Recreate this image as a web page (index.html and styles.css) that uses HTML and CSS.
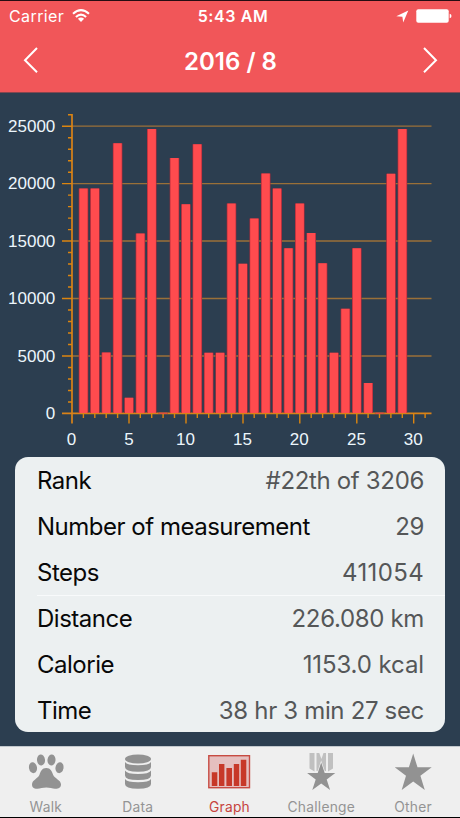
FILE: index.html
```
<!DOCTYPE html>
<html lang="en">
<head>
<meta charset="utf-8">
<title>Graph</title>
<link rel="stylesheet" href="styles.css">
</head>
<body>
<div class="app">
  <header class="header">
    <div class="status">
      <div class="carrier"><span>Carrier</span>
        <svg width="18" height="14" viewBox="0 0 18 14"><g fill="none" stroke="#fff" stroke-width="2.1"><path d="M1 4.8Q9-2.4 17 4.8"/><path d="M3.9 8Q9 3.4 14.1 8"/></g><path fill="#fff" d="M5.9 9.7Q9 7.3 12.1 9.7L9 13Z"/></svg>
      </div>
      <span class="clock">5:43 AM</span>
      <div class="power">
        <svg width="13" height="13" viewBox="0 0 13 13"><path fill="#fff" d="M12.3.5 7.2 12.5 6.4 6.8.3 6.2Z"/></svg>
        <svg width="36" height="14" viewBox="0 0 36 14"><rect x=".3" y=".3" width="32.4" height="13.4" rx="2" fill="#fff"/><path fill="#fff" d="M33.7 4.8Q35.5 5.2 35.5 7T33.7 9.2Z"/></svg>
      </div>
    </div>
    <nav class="month">
      <svg width="16" height="28" viewBox="0 0 16 28"><path d="M14 2 2 14.2 14 26.2"/></svg>
      <h1>2016 / 8</h1>
      <svg width="16" height="28" viewBox="0 0 16 28"><path d="M2 2 14 14.2 2 26.2"/></svg>
    </nav>
  </header>
  <svg class="chart" width="460" height="364" viewBox="0 93 460 364">
    <path class="grid" d="M72 126.2H431.5M72 183.6H431.5M72 241H431.5M72 298.5H431.5M72 356H431.5"/>
    <path class="axis" d="M72 114V423.5M62 413.4H431.5"/>
    <path class="tick" d="M62 126.2H72M62 183.6H72M62 241H72M62 298.5H72M62 356H72
      M68 114.7H72M68 137.7H72M68 149.2H72M68 160.7H72M68 172.2H72M68 195.1H72M68 206.6H72M68 218.1H72M68 229.6H72M68 252.5H72M68 264H72M68 275.5H72M68 287H72M68 310H72M68 321.5H72M68 333H72M68 344.5H72M68 367.5H72M68 379H72M68 390.5H72M68 402H72"/>
    <path class="tick" d="M129 413V423.5M186 413V423.5M243 413V423.5M299.8 413V423.5M356.8 413V423.5M413.7 413V423.5
      M83.4 413V418M94.8 413V418M106.2 413V418M117.6 413V418M140.3 413V418M151.7 413V418M163.1 413V418M174.5 413V418M197.3 413V418M208.7 413V418M220.1 413V418M231.5 413V418M254.2 413V418M265.6 413V418M277 413V418M288.4 413V418M311.2 413V418M322.6 413V418M334 413V418M345.4 413V418M368.1 413V418M379.5 413V418M390.9 413V418M402.3 413V418M425.1 413V418"/>
    <defs>
      <path id="days" d="M83.5 413V188.4M94.9 413V188.4M106.3 413V352.4M117.6 413V143.3M129 413V397.8M140.4 413V233.6M151.8 413V128.9M163.2 413.5V412.7M174.5 413V158.1M185.9 413V204.3M197.3 413V144.3M208.7 413V352.7M220.1 413V352.7M231.5 413V203.4M242.9 413V263.8M254.3 413V218.5M265.7 413V173.6M277.1 413V188.5M288.5 413V248.2M299.8 413V203.5M311.2 413V233.1M322.6 413V263.2M334 413V352.8M345.4 413V308.8M356.8 413V248.3M368.2 413V383M379.6 413.5V412.7M391 413V173.7M402.4 413V128.9"/>
    </defs>
    <use class="bar-edge" href="#days"/>
    <use class="bar-fill" href="#days"/>
    <g class="ylabels"><text x="55.3" y="131.8">25000</text><text x="55.3" y="189.3">20000</text><text x="55.3" y="246.8">15000</text><text x="55.3" y="304.2">10000</text><text x="55.3" y="361.7">5000</text><text x="55.3" y="419.2">0</text></g>
    <g class="xlabels"><text x="71.6" y="445">0</text><text x="129" y="445">5</text><text x="185.5" y="445">10</text><text x="242.5" y="445">15</text><text x="299.3" y="445">20</text><text x="356.5" y="445">25</text><text x="413.3" y="445">30</text></g>
  </svg>
  <dl class="stats">
    <div><dt>Rank</dt><dd>#22th of 3206</dd></div>
    <div><dt>Number of measurement</dt><dd>29</dd></div>
    <div class="divided"><dt>Steps</dt><dd class="wide">411054</dd></div>
    <div><dt>Distance</dt><dd>226.080 km</dd></div>
    <div><dt>Calorie</dt><dd class="even">1153.0 kcal</dd></div>
    <div><dt>Time</dt><dd>38 hr 3 min 27 sec</dd></div>
  </dl>
  <nav class="tabs">
    <a><svg width="44" height="44" viewBox="0 0 44 44"><ellipse cx="9" cy="18.7" rx="4" ry="5.5" transform="rotate(-10 9 18.7)"/><ellipse cx="17" cy="11" rx="4" ry="5.5" transform="rotate(-6 17 11)"/><ellipse cx="27.5" cy="11" rx="4" ry="5.5" transform="rotate(6 27.5 11)"/><ellipse cx="35.5" cy="18.7" rx="4" ry="5.5" transform="rotate(10 35.5 18.7)"/><path d="M22.3 19C18 19 16.5 22.5 15.4 26 14 29.5 8 31 8 35.5 8 39 10.5 40 13.5 39.8 16 39.6 19 38.5 22.3 38.5S28.5 39.6 31 39.8C34 40 37 39 37 35.5 37 31 30.5 29.5 29.2 26 28 22.5 26.5 19 22.3 19Z"/></svg><span>Walk</span></a>
    <a><svg width="44" height="44" viewBox="0 0 44 44"><ellipse cx="22" cy="10" rx="13" ry="4.6"/><path d="M9 13Q11 16.3 22 16.3T35 13V18Q35 22.7 22 22.7T9 18ZM9 21.5Q11 25 22 25T35 21.5V26.5Q35 31 22 31T9 26.5ZM9 30Q11 33.3 22 33.3T35 30V35Q35 39.7 22 39.7T9 35Z"/></svg><span>Data</span></a>
    <a class="active"><svg width="44" height="44" viewBox="0 0 44 44"><rect class="frame" x="1.8" y="6.7" width="40.7" height="32"/><path d="M4.8 37V23.2H10.3V37ZM12 37V15H17.4V37ZM19.4 37V19H25V37ZM26.8 37V15H32.2V37ZM33.8 37V10.7H39.3V37Z"/></svg><span>Graph</span></a>
    <a><svg width="44" height="44" viewBox="0 0 44 44"><path class="ribbon" d="M10.5 4H15.5V22.5L10.5 19.5ZM17.5 4H27V22H17.5ZM29 4H34V19.5L29 22.5Z"/><path class="notch" d="M20.3 4H24.5L22.4 10Z"/><path class="cut" d="M22.2 13.6 25.7 24H36.3L27.7 30.5 31.1 41 22.2 34.6 13.3 41 16.7 30.5 8.1 24H18.7Z"/></svg><span>Challenge</span></a>
    <a><svg width="44" height="44" viewBox="0 0 44 44"><path d="M22.2 4.6 26.5 18.3H40.7L29.4 26.7 33.8 41 22.2 32.4 10.7 41 15 26.7 3.7 18.3H17.9Z"/></svg><span>Other</span></a>
  </nav>
</div>
</body>
</html>
```
FILE: styles.css
```
* { box-sizing: border-box; }
body { margin: 0; background: #2c3e50; font-family: Inter, "Liberation Sans", sans-serif; }
.app { width: 460px; height: 818px; display: flex; flex-direction: column; background: #2c3e50; overflow: hidden; }
svg { display: block; flex: none; }
.header { height: 93px; flex: none; background: #f15659; color: #fff; border-top: 1px solid #260d12; border-bottom: 1px solid #85464f; }
.status { height: 30px; display: grid; grid-template-columns: 1fr auto 1fr; align-items: center; padding: 0 8px 0 9px; font-size: 16px; }
.carrier { display: flex; align-items: center; gap: 8px; letter-spacing: .4px; }
.clock { font-weight: 600; font-size: 16px; letter-spacing: .6px; padding-left: 5px; }
.power { display: flex; align-items: center; justify-content: flex-end; gap: 7px; }
.month { height: 61px; display: flex; align-items: center; justify-content: space-between; padding: 0 22px 0 23px; }
.month svg { fill: none; stroke: #fff; stroke-width: 2; margin-bottom: 3px; }
.month h1 { margin: 0; font-size: 24px; font-weight: 600; }
.chart { font: 17px "Liberation Sans", sans-serif; }
.chart text { fill: #ecf6fc; }
.grid { stroke: #9a7038; stroke-width: 1.3; }
.axis { stroke: #d98218; stroke-width: 1.7; }
.tick { stroke: #dc850f; stroke-width: 1.4; }
.bar-edge { stroke: #a82b3b; stroke-width: 9.6; }
.bar-fill { stroke: #ff4b4e; stroke-width: 8.2; }
.ylabels { text-anchor: end; }
.xlabels { text-anchor: middle; }
.stats { flex: none; margin: 0 15px; height: 275px; background: #ecf0f1; border-radius: 13px; font-size: 24px; padding-left: 22px; }
.stats div { height: 46px; padding-right: 21px; display: flex; justify-content: space-between; align-items: center; white-space: nowrap; }
.stats .divided { box-shadow: 0 1px #f8fafb; }
.stats dt { color: #080808; letter-spacing: -.49px; }
.stats dd { margin: 0; color: #555758; letter-spacing: -.33px; }
.stats dd.wide { letter-spacing: .35px; }
.stats dd.even { letter-spacing: -.1px; }
.tabs { margin: 14px 0 0; padding-right: 1px; height: 72px; display: flex; background: #efefef; border-top: 1px solid #c2c8cd; border-bottom: 1px solid #000; }
.tabs a { flex: 1; display: flex; flex-direction: column; align-items: center; padding-top: 2px; color: #949494; font-size: 13.8px; line-height: 17px; }
.tabs span { margin-top: 6px; letter-spacing: .25px; }
.tabs svg { fill: #929292; }
.tabs .active { color: #c7433e; }
.active svg { fill: #c73828; }
.active .frame { fill: #e5bfbf; stroke: #c74b42; stroke-width: 1.4; }
.ribbon { fill: #c0c0c0; }
.notch { fill: #efefef; }
.cut { stroke: #efefef; stroke-width: 1.4; paint-order: stroke; }
```
